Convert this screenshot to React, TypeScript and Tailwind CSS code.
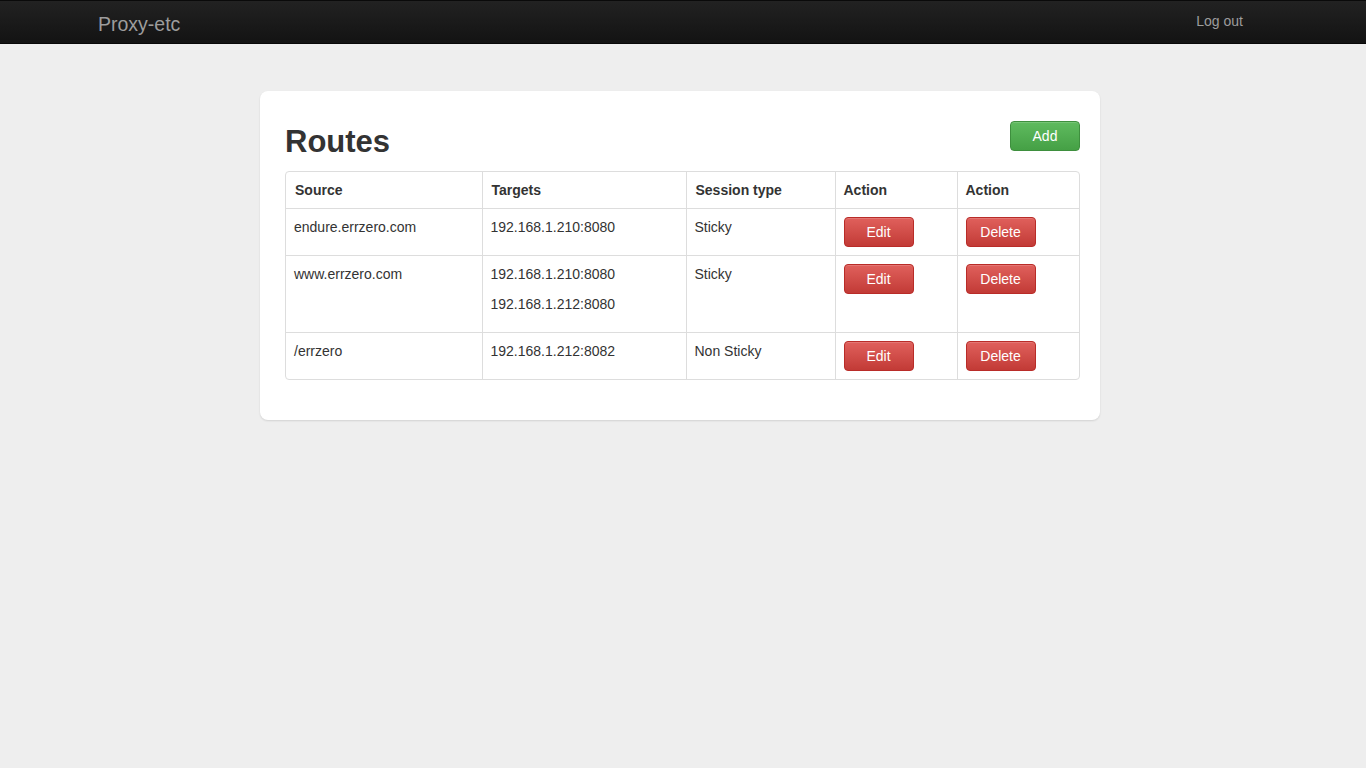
const routes = [
  { source: 'endure.errzero.com', targets: ['192.168.1.210:8080'], session: 'Sticky' },
  { source: 'www.errzero.com', targets: ['192.168.1.210:8080', '192.168.1.212:8080'], session: 'Sticky' },
  { source: '/errzero', targets: ['192.168.1.212:8082'], session: 'Non Sticky' },
]

const redBtn =
  'w-[70px] h-[30px] rounded-[4px] border border-[#b92c28] bg-gradient-to-b from-[#e0605c] to-[#c23a36] text-white text-[14px] leading-none shadow-[inset_0_1px_0_rgba(255,255,255,0.15)]'

export default function App() {
  return (
    <div className="min-h-[768px] bg-[#eeeeee] text-[#333] text-[14px] leading-[20px] font-['Liberation_Sans',Arial,sans-serif]">
      {/* navbar */}
      <nav className="h-[44px] border-t border-[#0a0a0a] border-b border-b-[#080808] bg-gradient-to-b from-[#222222] to-[#131313]">
        <div className="mx-auto flex h-full w-[1170px] items-center justify-between">
          <a className="mt-[4px] text-[19.5px] leading-[20px] text-[#9d9d9d]">Proxy-etc</a>
          <a className="mr-[25px] -mt-[2px] text-[14px] text-[#9d9d9d]">Log out</a>
        </div>
      </nav>

      <div className="ml-[260px] mt-[47px] w-[840px] rounded-[8px] bg-white pl-[25px] pr-[20px] pt-[30px] pb-[40px] shadow-[0_1px_2px_rgba(0,0,0,0.12)]">
        <div className="flex items-start justify-between">
          <h1 className="mt-[1px] mb-[9px] text-[31px] font-bold leading-[40px] text-[#333]">Routes</h1>
          <button className="w-[70px] h-[30px] rounded-[4px] border border-[#3e8f3e] bg-gradient-to-b from-[#5fbb5f] to-[#45a045] text-white text-[14px] leading-none shadow-[inset_0_1px_0_rgba(255,255,255,0.15)]">
            Add
          </button>
        </div>

        <div className="overflow-hidden rounded-[4px] border border-[#dddddd]">
          <table className="w-full border-collapse text-left">
            <thead>
              <tr className="font-bold">
                <th className="w-[196px] border-r border-[#ddd] px-[9px] py-[8px]">Source</th>
                <th className="w-[204px] border-r border-[#ddd] px-[9px] py-[8px]">Targets</th>
                <th className="w-[149px] border-r border-[#ddd] px-[9px] py-[8px]">Session type</th>
                <th className="w-[122px] border-r border-[#ddd] px-[8px] py-[8px]">Action</th>
                <th className="px-[8px] py-[8px]">Action</th>
              </tr>
            </thead>
            <tbody>
              {routes.map((r) => (
                <tr key={r.source} className="border-t border-[#ddd] align-top">
                  <td className="border-r border-[#ddd] px-[8px] py-[8px]">{r.source}</td>
                  <td className="border-r border-[#ddd] px-[8px] py-[8px]">
                    {r.targets.map((t) => (
                      <p key={t} className="mb-[10px]">{t}</p>
                    ))}
                  </td>
                  <td className="border-r border-[#ddd] px-[8px] py-[8px]">{r.session}</td>
                  <td className="border-r border-[#ddd] px-[8px] py-[8px]">
                    <button className={redBtn}>Edit</button>
                  </td>
                  <td className="px-[8px] py-[8px]">
                    <button className={redBtn}>Delete</button>
                  </td>
                </tr>
              ))}
            </tbody>
          </table>
        </div>
      </div>
    </div>
  )
}
